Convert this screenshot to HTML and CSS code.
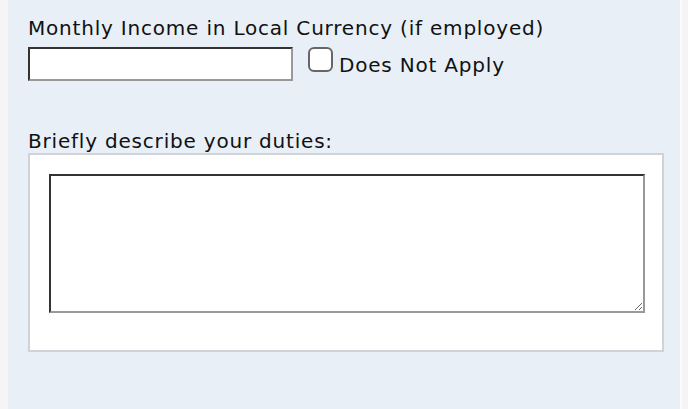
FILE: index.html
```html
<!DOCTYPE html>
<html lang="en">
<head>
    <meta charset="UTF-8">
    <meta name="viewport" content="width=device-width, initial-scale=1.0">
    <title>Employment Details</title>
    <link rel="stylesheet" href="styles.css">
</head>
<body>
    <div class="page">
        <div class="panel">
            <div class="field">
                <label class="label" for="income">Monthly Income in Local Currency (if employed)</label>
                <div class="row">
                    <input type="text" id="income" class="text-input">
                    <label class="check">
                        <input type="checkbox" class="check-box">
                        <span>Does Not Apply</span>
                    </label>
                </div>
            </div>

            <div class="field duties">
                <label class="label" for="duties">Briefly describe your duties:</label>
                <div class="box">
                    <textarea id="duties" class="text-area"></textarea>
                </div>
            </div>
        </div>
    </div>
</body>
</html>
```

FILE: styles.css
```css
html, body {
    margin: 0;
    height: 100%;
}
body {
    font-family: "DejaVu Sans", Verdana, sans-serif;
    font-size: 20px;
    letter-spacing: 0.8px;
    color: #111;
    background: #f5f5f5;
}
.page {
    height: 100%;
    padding: 0 6px 0 7px;
    box-sizing: border-box;
}
.panel {
    height: 100%;
    margin-left: 1px;
    border-right: 2px solid #fbfbfb;
    background: #e8eff7;
    padding: 16px 16px 0 20px;
    box-sizing: border-box;
}
.label {
    display: block;
    line-height: 24px;
}
.row {
    display: flex;
    align-items: flex-start;
    margin-top: 7px;
}
.text-input {
    width: 265px;
    height: 34px;
    box-sizing: border-box;
    margin: 0;
    border: 2px solid;
    border-color: #333 #999 #999 #333;
    background: #fff;
}
.check {
    display: flex;
    align-items: center;
    margin-left: 15px;
}
.check-box {
    appearance: none;
    width: 25px;
    height: 25px;
    margin: 0 6px 0 0;
    border: 2px solid #666;
    border-radius: 6px;
    background: #fff;
    box-sizing: border-box;
}
.check span {
    position: relative;
    top: 5px;
}
.duties {
    margin-top: 48px;
}
.box {
    width: 636px;
    box-sizing: border-box;
    padding: 19px 17px 37px 19px;
    background: #fff;
    border: 2px solid #cfd2d6;
}
.text-area {
    display: block;
    width: 596px;
    height: 139px;
    box-sizing: border-box;
    margin: 0;
    border: 2px solid;
    border-color: #333 #999 #999 #333;
    resize: both;
}
```
